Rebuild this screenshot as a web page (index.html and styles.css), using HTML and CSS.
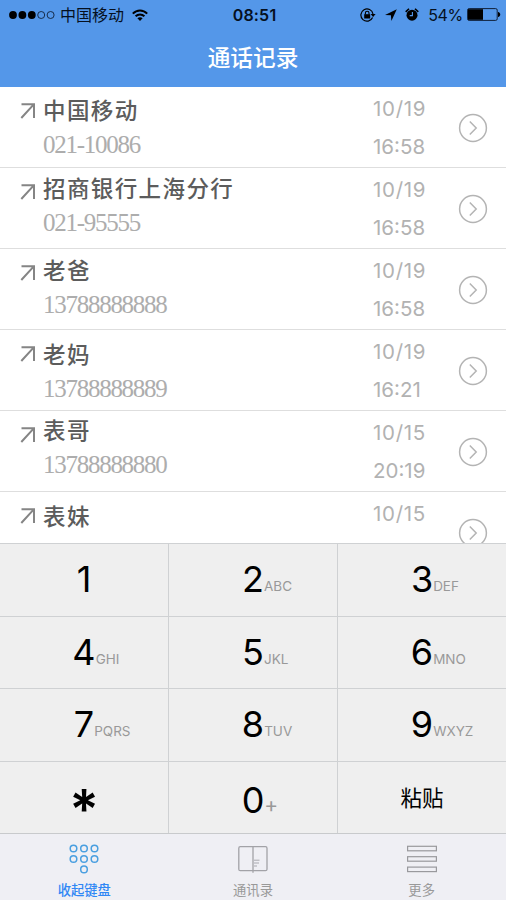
FILE: index.html
```html
<!DOCTYPE html>
<html lang="zh-CN">
<head>
<meta charset="utf-8">
<title>通话记录</title>
<link rel="stylesheet" href="styles.css">
</head>
<body>
<div class="phone">
  <header class="header">
    <div class="status">
      <div class="status-left">
        <svg class="signal" width="46" height="10" viewBox="0 0 46 10"><g fill="#000"><circle cx="4" cy="5" r="3.9"/><circle cx="13.4" cy="5" r="3.9"/><circle cx="22.8" cy="5" r="3.9"/></g><g fill="none" stroke="#10213a" stroke-width=".9"><circle cx="32.2" cy="5" r="3.5"/><circle cx="41.6" cy="5" r="3.5"/></g></svg>
        <span class="carrier">中国移动</span>
        <svg class="wifi" width="16" height="12" viewBox="0 0 16 12"><g fill="none" stroke="#000" stroke-width="2"><path d="M.8 4.6C4.8.3 11.2.3 15.2 4.6"/><path d="M3.6 7.3c2.5-2.5 6.3-2.5 8.8 0"/></g><path d="M5.4 9.2c1.5-1.4 3.7-1.4 5.2 0L8 12z"/></svg>
      </div>
      <div class="clock">08:51</div>
      <div class="status-right">
        <svg width="16" height="14" viewBox="0 0 16 14"><path d="M12.6 9.5A6.1 6.1 0 1 1 13 6" fill="none" stroke="#000" stroke-width="1.2"/><path d="M10.6 6h5l-2.5 3z"/><rect x="4.2" y="6.2" width="6" height="4.3"/><path d="M5.4 6.5V5a1.8 1.8 0 0 1 3.6 0v1.5" fill="none" stroke="#000" stroke-width="1.1"/></svg>
        <svg class="loc" width="12" height="12" viewBox="0 0 12 12"><path d="M11.8.3 0 5.9l5.9.3.5 5.8z"/></svg>
        <svg class="alarm" width="14" height="13" viewBox="0 0 14 13"><path d="M.7 3.9 4 .7M13.3 3.9 10 .7" stroke="#000" stroke-width="1.6"/><circle cx="7" cy="7.2" r="5.5"/><path d="M7.4 4v3.6H4.7" fill="none" stroke="#5497e9" stroke-width="1.1"/></svg>
        <span class="percent">54%</span>
        <svg class="battery" width="34" height="13" viewBox="0 0 34 13"><rect x=".6" y=".6" width="29.6" height="11.8" rx="1.5" fill="none" stroke="#10213a" stroke-width="1"/><rect x="1" y="1.2" width="15" height="10.6"/><path d="M31 4c3 .6 3 4.4 0 5z"/></svg>
      </div>
    </div>
    <h1 class="title">通话记录</h1>
  </header>

  <main class="calls">
    <div class="call"><svg class="out" viewBox="0 0 15 16"><path d="M1 1.2h12.5V15M13.3 1.4.8 15"/></svg><div class="who"><div class="name">中国移动</div><div class="number">021-10086</div></div><div class="when"><span class="date">10/19</span><span>16:58</span></div><svg class="more" viewBox="0 0 30 30"><circle cx="15" cy="15" r="13.4"/><path d="m11.8 8.5 6.4 6.5-6.4 6.5"/></svg></div>
    <div class="call up-3"><svg class="out" viewBox="0 0 15 16"><path d="M1 1.2h12.5V15M13.3 1.4.8 15"/></svg><div class="who"><div class="name">招商银行上海分行</div><div class="number">021-95555</div></div><div class="when"><span class="date">10/19</span><span>16:58</span></div><svg class="more" viewBox="0 0 30 30"><circle cx="15" cy="15" r="13.4"/><path d="m11.8 8.5 6.4 6.5-6.4 6.5"/></svg></div>
    <div class="call up-2"><svg class="out" viewBox="0 0 15 16"><path d="M1 1.2h12.5V15M13.3 1.4.8 15"/></svg><div class="who"><div class="name">老爸</div><div class="number">13788888888</div></div><div class="when"><span class="date">10/19</span><span>16:58</span></div><svg class="more" viewBox="0 0 30 30"><circle cx="15" cy="15" r="13.4"/><path d="m11.8 8.5 6.4 6.5-6.4 6.5"/></svg></div>
    <div class="call down-1"><svg class="out" viewBox="0 0 15 16"><path d="M1 1.2h12.5V15M13.3 1.4.8 15"/></svg><div class="who"><div class="name">老妈</div><div class="number">13788888889</div></div><div class="when"><span class="date">10/19</span><span>16:21</span></div><svg class="more" viewBox="0 0 30 30"><circle cx="15" cy="15" r="13.4"/><path d="m11.8 8.5 6.4 6.5-6.4 6.5"/></svg></div>
    <div class="call up-4"><svg class="out" viewBox="0 0 15 16"><path d="M1 1.2h12.5V15M13.3 1.4.8 15"/></svg><div class="who"><div class="name">表哥</div><div class="number">13788888880</div></div><div class="when"><span class="date">10/15</span><span>20:19</span></div><svg class="more" viewBox="0 0 30 30"><circle cx="15" cy="15" r="13.4"/><path d="m11.8 8.5 6.4 6.5-6.4 6.5"/></svg></div>
    <div class="call down-1"><svg class="out" viewBox="0 0 15 16"><path d="M1 1.2h12.5V15M13.3 1.4.8 15"/></svg><div class="who"><div class="name">表妹</div></div><div class="when"><span class="date">10/15</span></div><svg class="more" viewBox="0 0 30 30"><circle cx="15" cy="15" r="13.4"/><path d="m11.8 8.5 6.4 6.5-6.4 6.5"/></svg></div>
  </main>

  <section class="keypad">
    <div class="key"><b>1</b></div>
    <div class="key"><b>2</b><i>ABC</i></div>
    <div class="key"><b>3</b><i>DEF</i></div>
    <div class="key"><b>4</b><i>GHI</i></div>
    <div class="key"><b>5</b><i>JKL</i></div>
    <div class="key"><b>6</b><i>MNO</i></div>
    <div class="key"><b>7</b><i>PQRS</i></div>
    <div class="key"><b>8</b><i>TUV</i></div>
    <div class="key"><b>9</b><i>WXYZ</i></div>
    <div class="key star"><b>*</b></div>
    <div class="key zero"><b>0</b><i class="plus">+</i></div>
    <div class="key paste"><b>粘贴</b></div>
  </section>

  <nav class="tabs">
    <div class="tab active">
      <svg width="30" height="30" viewBox="0 0 30 30" fill="none" stroke="#4a9fe0" stroke-width="1.5"><circle cx="4.5" cy="4.5" r="3.3"/><circle cx="15" cy="4.5" r="3.3"/><circle cx="25.5" cy="4.5" r="3.3"/><circle cx="4.5" cy="15" r="3.3"/><circle cx="15" cy="15" r="3.3"/><circle cx="25.5" cy="15" r="3.3"/><circle cx="15" cy="25.4" r="3.3"/></svg>
      <span>收起键盘</span>
    </div>
    <div class="tab">
      <svg width="30" height="30" viewBox="0 0 30 30" fill="none" stroke="#a2a2a7" stroke-width="1.3"><rect x=".8" y="2.7" width="28.2" height="24" rx="1.5"/><path d="M15 2.7v26"/><path d="M16 16.2h5.5M16 19h5M16 22h3" stroke-width=".9"/></svg>
      <span>通讯录</span>
    </div>
    <div class="tab">
      <svg width="30" height="30" viewBox="0 0 30 30" fill="none" stroke="#99999d" stroke-width="1.2"><rect x=".6" y="2.3" width="28.8" height="4.5"/><rect x=".6" y="12.7" width="28.8" height="4.5"/><rect x=".6" y="23.1" width="28.8" height="4.5"/></svg>
      <span>更多</span>
    </div>
  </nav>
</div>
</body>
</html>
```
FILE: styles.css
```css
* { box-sizing: border-box; }
body { margin: 0; background: #fff; font-family: Inter, "Noto Sans CJK SC", sans-serif; }
svg { display: block; flex: none; }
.phone { width: 507px; height: 900px; padding-right: 1px; display: flex; flex-direction: column; overflow: hidden; }

.header { height: 87px; background: #5497e9; flex: none; }
.status { height: 30px; display: grid; grid-template-columns: 1fr auto 1fr; align-items: center; padding: 0 6px 0 9px; color: #05101f; }
.status-left, .status-right { display: flex; align-items: center; }
.status-right { justify-content: flex-end; margin-top: -1px; }
.carrier { font-size: 16px; line-height: 20px; margin-left: 5px; }
.wifi { margin-left: 8px; }
.clock { font-size: 16px; font-weight: 600; letter-spacing: .2px; }
.loc { margin-left: 9px; }
.alarm { margin-left: 8px; }
.percent { font-size: 16px; letter-spacing: -.3px; margin-left: 9px; }
.battery { margin-left: 4px; margin-right: -1px; }
.title { margin: 12px 0 0; height: 32px; line-height: 32px; text-align: center; font-size: 22.7px; font-weight: 500; color: #fff; }

.calls { height: 456px; overflow: hidden; flex: none; }
.call { height: 81px; display: flex; border-bottom: 1.5px solid #dedede; padding: 1px 0 0 20px; }
.out { width: 16px; height: 16px; margin-top: 15px; fill: none; stroke: #858585; stroke-width: 2; }
.who { width: 337px; padding: 7px 0 0 7px; }
.name { height: 32px; line-height: 32px; font-size: 22.5px; letter-spacing: 1.4px; font-weight: 500; color: #5c5c5c; }
.number { height: 30px; line-height: 30px; margin-top: 3px; font-family: "Liberation Serif", serif; font-size: 25px; letter-spacing: -1.27px; color: #adadad; }
.up-4 .who { padding-top: 3px; }
.up-3 .who { padding-top: 4px; }
.up-2 .who { padding-top: 5px; }
.down-1 .who { padding-top: 8px; }
.when { width: 85px; padding-top: 6px; display: flex; flex-direction: column; font-size: 20.5px; line-height: 30px; gap: 8px; color: #b2b2b2; }
.date { letter-spacing: .7px; }
.more { width: 30px; height: 30px; margin-top: 25px; fill: none; stroke: #b4b4b4; stroke-width: 1.5; }

.keypad { height: 291px; flex: none; display: grid; grid-template-columns: repeat(3, 1fr); grid-template-rows: repeat(4, minmax(0, 1fr)); gap: 1px; background: #cfd1d3; border-top: 1px solid #cfd1d3; border-bottom: 1px solid #c8cacc; }
.key { background: #efefef; display: grid; grid-template-columns: 1fr auto 1fr; align-items: baseline; align-content: start; line-height: 71px; }
.key b { grid-column: 2; font-size: 36px; font-weight: 400; color: #000; }
.key i { font-style: normal; font-size: 13.5px; color: #999; }
.key:not(.zero) i { transform: translateY(-1px); }
.key.star { padding-top: 27px; line-height: 40px; }
.key.star b { font-size: 55px; font-weight: 600; }
.key.zero { padding-top: 3px; line-height: 68px; padding-top: 4px; }
.key .plus { font-size: 21px; transform: translateY(-1px); }
.key.paste { padding-top: 1px; line-height: 70px; }
.key.paste b { font-size: 21.5px; }

.tabs { height: 66px; flex: none; display: grid; grid-template-columns: repeat(3, 1fr); background: #efeff4; }
.tab { display: flex; flex-direction: column; align-items: center; padding-top: 10px; color: #999; font-size: 13.3px; }
.tab span { line-height: 18px; margin-top: 7px; }
.active { color: #2f87f5; font-weight: 500; }
```
